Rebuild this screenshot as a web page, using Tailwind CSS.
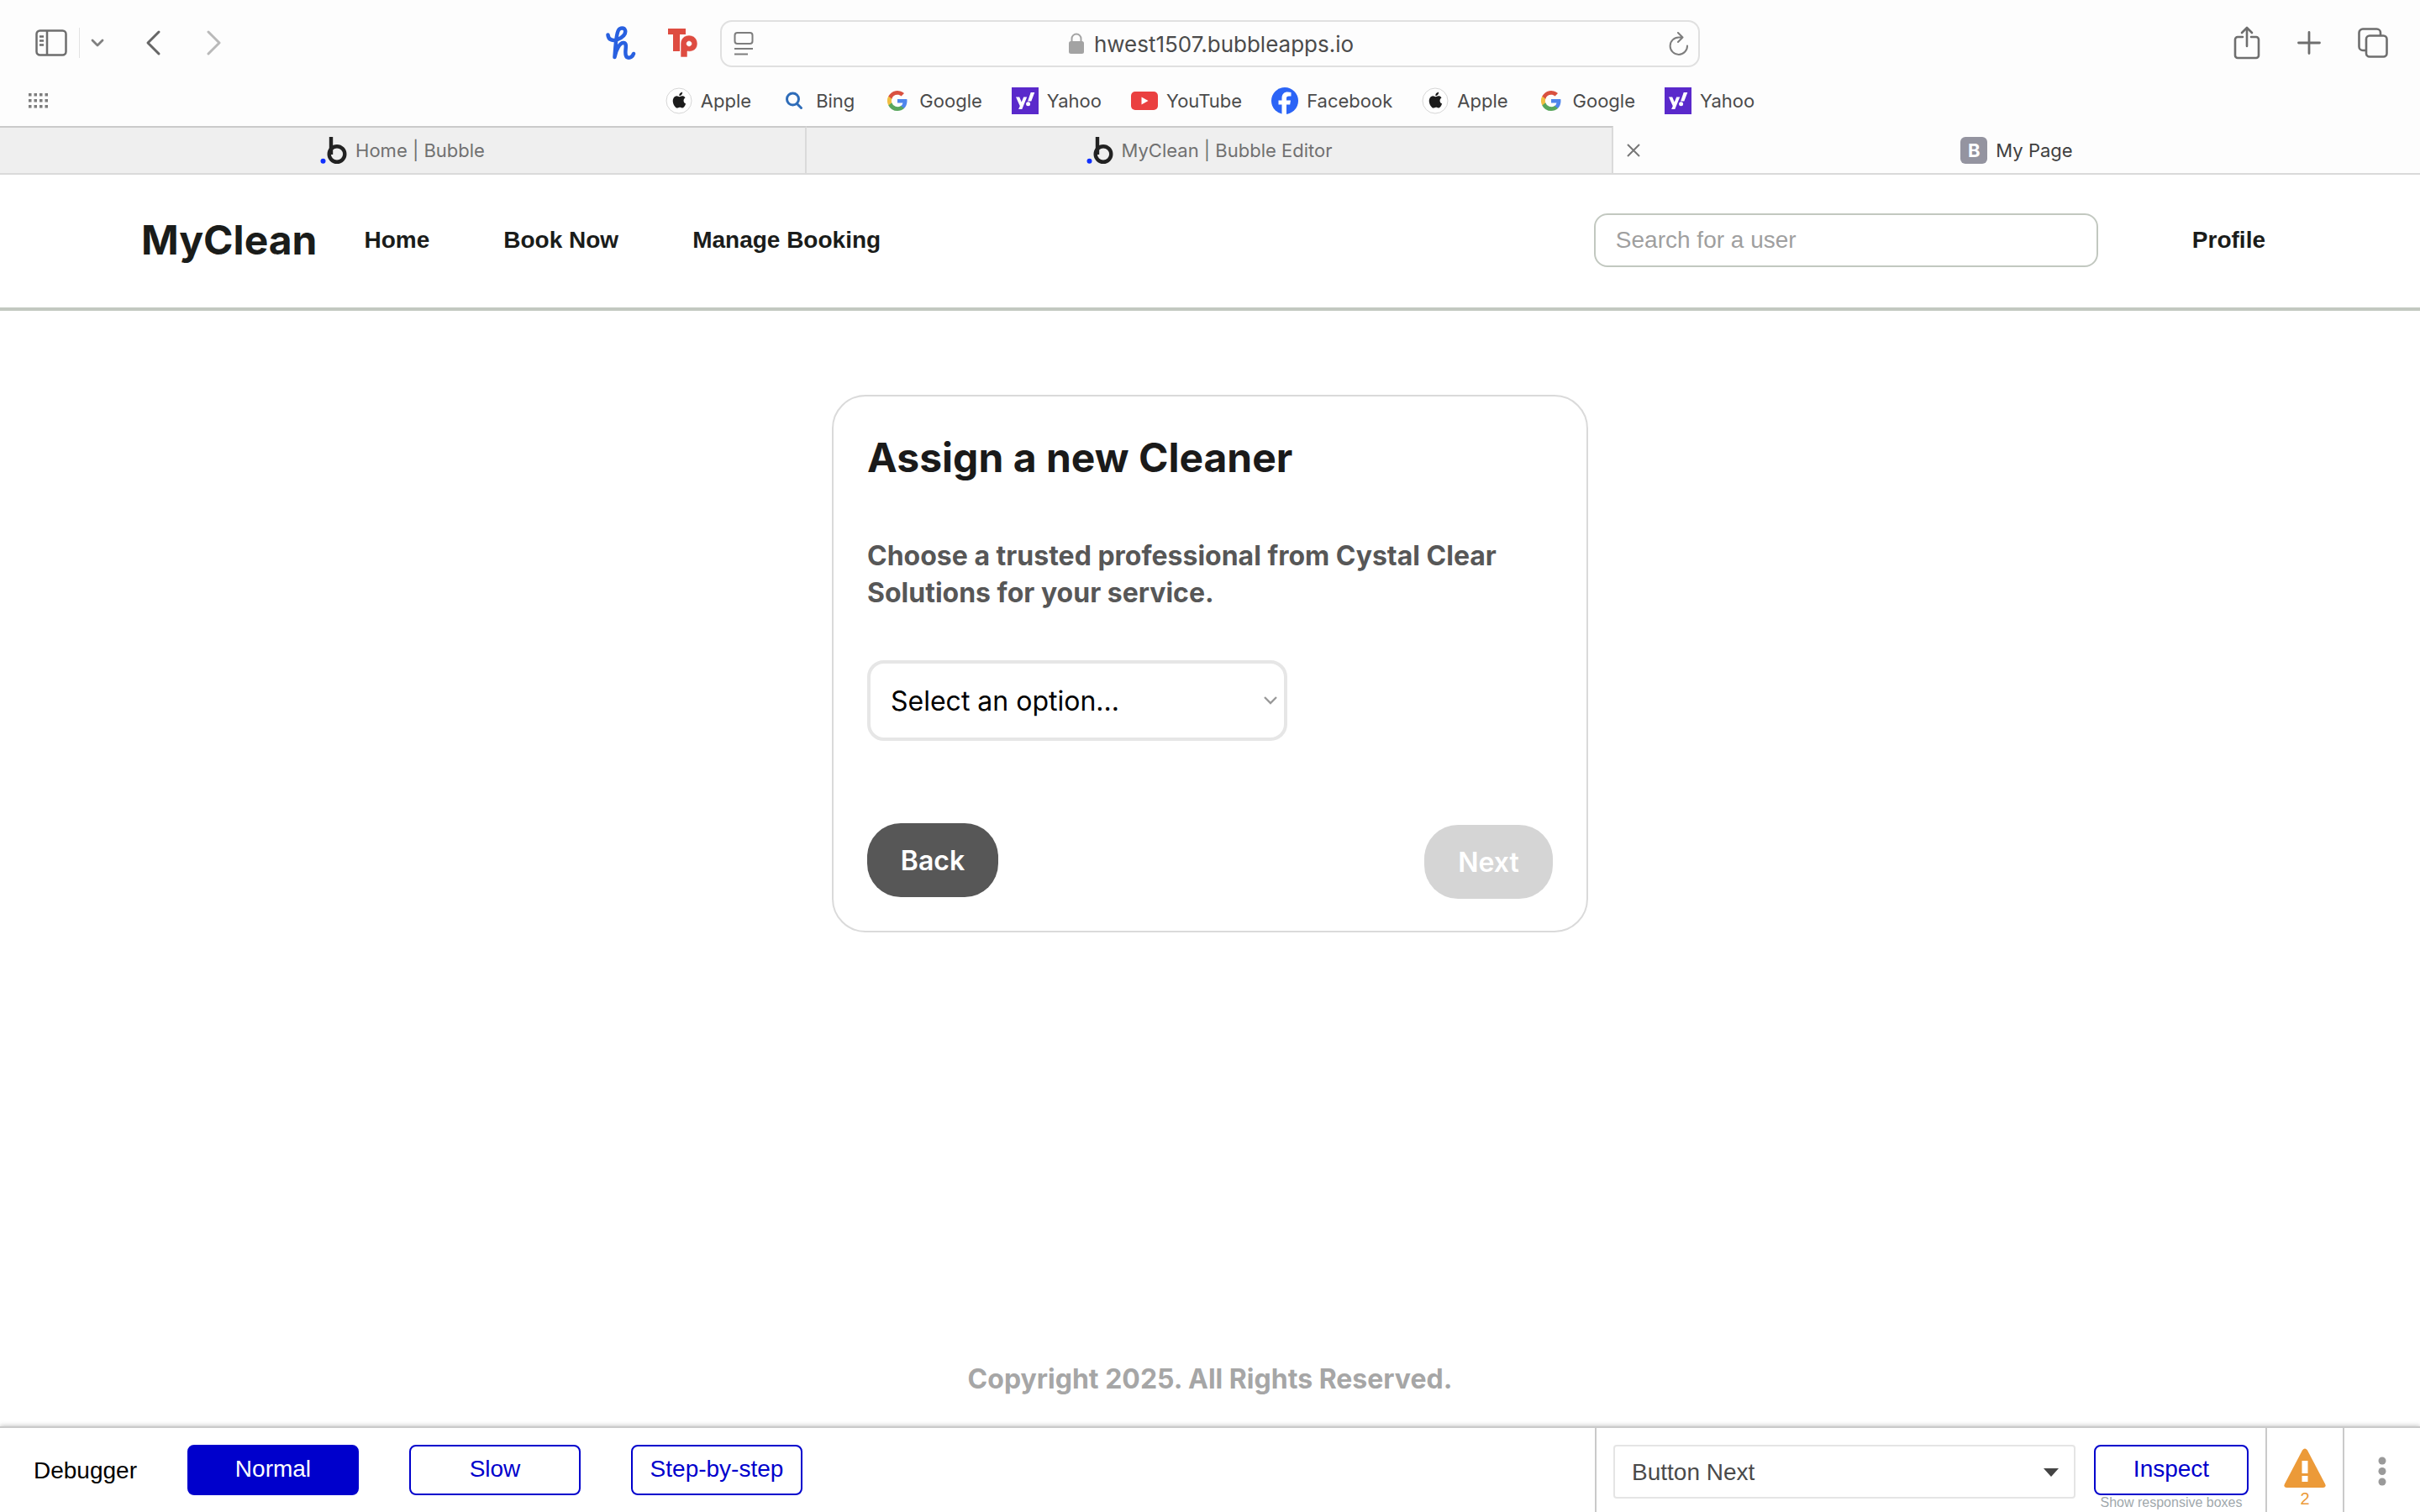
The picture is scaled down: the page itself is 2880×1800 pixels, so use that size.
<!DOCTYPE html>
<html lang="en">
<head>
<meta charset="utf-8">
<title>My Page</title>
<script src="https://cdn.jsdelivr.net/npm/@tailwindcss/browser@4"></script>
</head>
<body class="flex min-h-screen flex-col bg-white font-['Liberation_Sans',Arial,sans-serif] text-black">
<svg class="hidden" aria-hidden="true">
  <symbol id="apple" viewBox="0 0 32 32"><circle cx="16" cy="16" r="15" fill="#fff" stroke="#d6d6d6" stroke-width="1"/><path transform="translate(-3.400 -3.700) scale(1.200)" d="M20.800 16.300c0-2 1.600-2.900 1.700-3-1-1.400-2.400-1.600-2.900-1.600-1.200-.1-2.400.7-3 .7s-1.600-.7-2.600-.7c-1.300 0-2.600.8-3.200 2-1.400 2.400-.4 5.900 1 7.900.7.900 1.400 2 2.500 2 1 0 1.400-.7 2.600-.7s1.500.7 2.600.6c1.100 0 1.700-1 2.400-1.900.7-1.100 1-2.200 1.100-2.200-.1 0-2.200-.8-2.200-3.100zM18.800 10.300c.6-.7.900-1.600.8-2.500-.8 0-1.700.5-2.300 1.200-.5.600-1 1.500-.8 2.400.8 0 1.700-.4 2.300-1.100z" fill="#1c1c1c"/></symbol>
  <symbol id="google" viewBox="0 0 24 24"><path fill="#4f86ec" d="M23.500 12.300c0-.8-.1-1.600-.2-2.300H12v4.500h6.500a5.600 5.600 0 0 1-2.400 3.600v3h3.900c2.200-2.100 3.500-5.200 3.500-8.800z"/><path fill="#58a65c" d="M12 24c3.200 0 6-1.100 8-2.900l-3.900-3a7.200 7.200 0 0 1-10.800-3.800h-4v3.100A12 12 0 0 0 12 24z"/><path fill="#f1be42" d="M5.300 14.300a7.200 7.200 0 0 1 0-4.600V6.600h-4a12 12 0 0 0 0 10.800z"/><path fill="#d95140" d="M12 4.800c1.800 0 3.300.6 4.600 1.800L20 3.100A12 12 0 0 0 1.300 6.600l4 3.100A7.200 7.200 0 0 1 12 4.800z"/></symbol>
  <symbol id="yahoo" viewBox="0 0 32 32"><path fill="#5a29cb" d="M0 0h32v32H0z"/><path fill="#fff" d="M5 11.500h4.200l2.500 5.900 2.500-5.900h4L12.300 26H8.100l1.700-3.700zM22.700 6h4.600l-4 10.500h-4.200z"/><circle cx="19.600" cy="19.700" r="2.500" fill="#fff"/></symbol>
  <symbol id="bubble" viewBox="0 0 32 32"><path d="M13 0v21" stroke="#222" stroke-width="4.400"/><circle cx="20" cy="20.500" r="9.300" fill="none" stroke="#222" stroke-width="4.400"/><circle cx="3.500" cy="28.800" r="3" fill="#1030ff"/></symbol>
</svg>

<div class="bg-[#fdfdfd] font-[Inter,sans-serif] text-[#4b4b4b]">
  <div class="grid h-[90px] grid-cols-[1fr_1166px_1fr] items-center pt-[14px]">
    <div class="flex items-center justify-between pr-[26px] pb-0.5 pl-[42px]">
      <div class="flex items-center">
        <button aria-label="Sidebar"><svg class="h-8 w-[38px]" viewBox="0 0 38 32" fill="none" stroke="#6e6e6e" stroke-width="2.500"><rect x="1.500" y="1.500" width="35" height="29" rx="4"/><path d="M14 1v30M5 8.500h5M5 13.500h5M5 18.500h5"/></svg></button>
        <span class="ml-[14px] h-9 w-px bg-[#e2e2e2]"></span>
        <button aria-label="Tab groups" class="ml-[13px]"><svg class="h-4 w-4" viewBox="0 0 16 16" fill="none" stroke="#808080" stroke-width="2.800" stroke-linecap="round" stroke-linejoin="round"><path d="M2 5l6 6 6-6"/></svg></button>
        <button aria-label="Back" class="ml-12"><svg class="h-8 w-5" viewBox="0 0 20 32" fill="none" stroke="#666" stroke-width="3" stroke-linecap="round" stroke-linejoin="round"><path d="M17 3L4 16l13 13"/></svg></button>
        <button aria-label="Forward" class="ml-[53px]"><svg class="h-8 w-5" viewBox="0 0 20 32" fill="none" stroke="#b9b9b9" stroke-width="3" stroke-linecap="round" stroke-linejoin="round"><path d="M3 3l13 13L3 29"/></svg></button>
      </div>
      <div class="flex items-center gap-[38px]">
        <button aria-label="Honey"><svg class="h-10 w-9" viewBox="0 0 36 40" fill="none" stroke="#2860e0" stroke-width="4.500" stroke-linecap="round" stroke-linejoin="round"><path d="M2.500 10.500C3 17 9 18 14 16c7-3 10-7 9-11-1-3.500-6-3.500-8 0-3 5-3.500 20-4.500 32C12 28 17 19 21.500 20c5.500 1-1 13 3.500 17 4 2 7-1 8-4"/></svg></button>
        <button aria-label="Teachers Pay"><svg class="h-9 w-9" viewBox="0 0 36 36" fill="#de4c41"><path d="M0 1h21v7h-7v20H6V8H0z"/><path fill-rule="evenodd" stroke="#fdfdfd" stroke-width=".6" d="M15 28V19c0-6 4.500-10 10-10s10 4 10 10-5 10.500-12 9V35H15zm10-12a3 3 0 1 0 .1 0z"/></svg></button>
      </div>
    </div>
    <div class="flex h-14 items-center rounded-[14px] border-2 border-[#e0e0e0] pr-[11px] pl-[14px]">
      <svg class="h-7 w-6" viewBox="0 0 24 28" fill="none" stroke="#7d7d7d" stroke-width="2"><rect x="1.500" y="1" width="21" height="13" rx="3"/><path d="M1 20h22M1 26.500h16"/></svg>
      <div class="flex flex-1 items-center justify-center gap-3 text-[26px]">
        <svg class="h-7 w-[18px]" viewBox="0 0 18 28"><rect y="11" width="18" height="15" rx="2.500" fill="#a3a3a3"/><path d="M3.500 12V8a5.500 5.500 0 0 1 11 0v4" fill="none" stroke="#a3a3a3" stroke-width="2"/></svg>
        <span>hwest1507.bubbleapps.io</span>
      </div>
      <button aria-label="Reload"><svg class="h-7 w-6" viewBox="0 0 24 28" fill="none" stroke="#7d7d7d" stroke-width="2" stroke-linecap="round" stroke-linejoin="round"><path d="M22 16.500A10.200 10.200 0 1 1 12 6.500h4M11 1l5.500 5.500-5.500 5.500"/></svg></button>
    </div>
    <div class="flex items-center justify-end gap-11 pr-[38px] pb-0.5">
      <button aria-label="Share"><svg class="h-10 w-8" viewBox="0 0 32 40" fill="none" stroke="#6e6e6e" stroke-width="2.600" stroke-linecap="round" stroke-linejoin="round"><path d="M11 13H5a3 3 0 0 0-3 3v19a3 3 0 0 0 3 3h22a3 3 0 0 0 3-3V16a3 3 0 0 0-3-3h-6M16 24V2M10 8l6-6 6 6"/></svg></button>
      <button aria-label="New tab"><svg class="h-7 w-7" viewBox="0 0 28 28" stroke="#6e6e6e" stroke-width="2.800" stroke-linecap="round"><path d="M14 1.500v25M1.500 14h25"/></svg></button>
      <button aria-label="Tab overview"><svg class="h-9 w-9" viewBox="0 0 36 36" fill="none" stroke="#6e6e6e" stroke-width="2.600"><rect x="10" y="9.500" width="24.500" height="25" rx="4"/><path d="M10 27H6a4.500 4.500 0 0 1-4.500-4.500V6A4.500 4.500 0 0 1 6 1.500h16.500A4.500 4.500 0 0 1 27 6v3.500"/></svg></button>
    </div>
  </div>

  <div class="grid h-[60px] grid-cols-[1fr_auto_1fr] items-center px-[33px]">
    <button aria-label="Favorites" class="justify-self-start"><svg class="h-5 w-6" viewBox="0 0 24 20" fill="#7d7d7d"><g id="dots"><rect x="1" y="1" width="3.500" height="3.500"/><rect x="7.500" y="1" width="3.500" height="3.500"/><rect x="14" y="1" width="3.500" height="3.500"/><rect x="20.500" y="1" width="3.500" height="3.500"/></g><use href="#dots" y="7"/><use href="#dots" y="14"/></svg></button>
    <nav class="flex items-center gap-[35px] text-[22px]">
      <a href="#" class="flex items-center gap-[10px]"><svg class="size-8"><use href="#apple"/></svg>Apple</a>
      <a href="#" class="flex items-center gap-[10px]"><svg class="size-8" viewBox="0 0 32 32" fill="none" stroke="#2e6cb8" stroke-width="3" stroke-linecap="round"><circle cx="14.500" cy="14" r="7"/><path d="M19.500 19.500l5 5"/></svg>Bing</a>
      <a href="#" class="flex items-center gap-[10px]"><svg class="size-8 p-1"><use href="#google"/></svg>Google</a>
      <a href="#" class="flex items-center gap-[10px]"><svg class="size-8"><use href="#yahoo"/></svg>Yahoo</a>
      <a href="#" class="flex items-center gap-[10px]"><svg class="size-8" viewBox="0 0 32 32"><rect y="5" width="32" height="22" rx="5" fill="#ea4040"/><path d="M12.500 11.500v9l8-4.500z" fill="#fff"/></svg>YouTube</a>
      <a href="#" class="flex items-center gap-[10px]"><svg class="size-8" viewBox="0 0 32 32"><circle cx="16" cy="16" r="16" fill="#2b64f6"/><path d="M12.500 32V20.500H8.500v-5h4V13c0-5 2.500-7.500 7-7.500 1.500 0 3 .2 4 .5v4.500h-2.500c-2.500 0-3 1-3 2.800v2.200h5l-.8 5H18V32z" fill="#fff"/></svg>Facebook</a>
      <a href="#" class="flex items-center gap-[10px]"><svg class="size-8"><use href="#apple"/></svg>Apple</a>
      <a href="#" class="flex items-center gap-[10px]"><svg class="size-8 p-1"><use href="#google"/></svg>Google</a>
      <a href="#" class="flex items-center gap-[10px]"><svg class="size-8"><use href="#yahoo"/></svg>Yahoo</a>
    </nav>
  </div>

  <div class="grid h-[58px] grid-cols-3 border-b-2 border-[#dadada] text-[22px] text-[#717171]">
    <div class="flex items-center justify-center gap-[10px] border-t-2 border-r-2 border-t-[#cacaca] border-r-[#dadada] bg-[#efefef]"><svg class="size-8"><use href="#bubble"/></svg>Home | Bubble</div>
    <div class="flex items-center justify-center gap-[10px] border-t-2 border-r-2 border-t-[#cacaca] border-r-[#dadada] bg-[#efefef]"><svg class="size-8"><use href="#bubble"/></svg>MyClean | Bubble Editor</div>
    <div class="grid grid-cols-[48px_1fr_48px] items-center border-t-2 border-transparent text-[#404040]">
      <button aria-label="Close tab" class="justify-self-center"><svg class="size-4" viewBox="0 0 16 16" stroke="#777" stroke-width="2"><path d="M1 1l14 14M15 1L1 15"/></svg></button>
      <div class="flex items-center justify-center gap-[10px]"><span class="flex size-8 items-center justify-center rounded-md bg-[#9494a0] font-bold text-white">B</span>My Page</div>
    </div>
  </div>
</div>

<header class="flex h-[162px] items-center border-b-4 border-[#c2c8c0] pr-[184px] pb-0.5 pl-[168px] text-[28px] font-bold text-[#1a1c1a]">
  <span class="font-[Inter,sans-serif] text-5xl font-bold">MyClean</span>
  <nav class="ml-14 flex gap-[88px]"><a href="#">Home</a><a href="#">Book Now</a><a href="#">Manage Booking</a></nav>
  <input type="text" aria-label="Search for a user" placeholder="Search for a user" class="ml-auto h-16 w-[600px] rounded-2xl border-2 border-[#c2c8c0] px-6 font-normal placeholder:text-[#9f9f9f]">
  <a href="#" class="ml-28">Profile</a>
</header>

<main class="flex flex-1 flex-col items-center font-[Inter,sans-serif]">
  <section class="mt-[100px] w-[900px] rounded-[40px] border-2 border-[#dadada] px-10 pt-11 pb-[38px]">
    <h1 class="text-5xl leading-[58px] font-bold text-[#1a1a1a]">Assign a new Cleaner</h1>
    <p class="mt-[66px] text-[32px] leading-[44px] font-bold text-[#575757]">Choose a trusted professional from Cystal Clear Solutions for your service.</p>
    <div class="relative mt-[58px] w-[500px]">
      <select aria-label="Cleaner" class="h-24 w-full appearance-none rounded-[20px] border-4 border-[#e6e6e6] bg-white px-6 pt-0.5 text-[32px] text-black"><option>Select an option...</option></select>
      <svg class="pointer-events-none absolute top-10 right-3 size-4" viewBox="0 0 16 16" fill="none" stroke="#999" stroke-width="2.400"><path d="M1 4l7 7 7-7"/></svg>
    </div>
    <div class="mt-[98px] flex items-end justify-between text-[32px] font-semibold text-white">
      <button class="mb-[2px] h-[88px] w-[156px] rounded-[40px] bg-[#575757] pt-0.5">Back</button>
      <button disabled class="h-[88px] w-[153px] rounded-[40px] bg-[#d5d5d5] pt-0.5">Next</button>
    </div>
  </section>
  <footer class="mt-auto pb-[34px] text-[32px] leading-[44px] font-bold text-[#a6a6a6]">Copyright 2025. All Rights Reserved.</footer>
</main>

<div class="flex h-[102px] border-t-2 border-[#cacaca] bg-white text-[28px] shadow-[0_0_6px_rgba(0,0,0,0.3)]">
  <div class="flex flex-1 items-start gap-[60px] pt-5 pl-10">
    <span class="leading-[62px]">Debugger</span>
    <div class="flex gap-[60px] text-[#0000cc]">
      <button class="h-[60px] w-[204px] rounded-lg border-2 border-[#0000cc] bg-[#0000cc] pb-0.5 text-white">Normal</button>
      <button class="h-[60px] w-[204px] rounded-lg border-2 border-[#0000cc] pb-0.5">Slow</button>
      <button class="h-[60px] w-[204px] rounded-lg border-2 border-[#0000cc] pb-0.5">Step-by-step</button>
    </div>
  </div>
  <div class="flex w-[798px] items-start gap-[22px] border-l-2 border-[#cacaca] pt-5 pl-5">
    <div class="relative">
      <select aria-label="Element" class="h-16 w-[550px] appearance-none rounded-sm border-2 border-[#e5e5e5] bg-white px-5 pt-0.5 text-[#4a4a4a]"><option>Button Next</option></select>
      <svg class="pointer-events-none absolute top-7 right-5 h-[10px] w-[18px]" viewBox="0 0 18 10" fill="#444"><path d="M0 0h18l-9 10z"/></svg>
    </div>
    <div class="flex flex-col items-center">
      <button class="h-[60px] w-[184px] rounded-lg border-2 border-[#0000cc] pb-0.5 text-[#0000cc]">Inspect</button>
      <span class="text-base leading-[18px] text-[#a0a8ac]">Show responsive boxes</span>
    </div>
  </div>
  <div class="flex w-[92px] flex-col items-center border-l-2 border-[#cacaca] pt-6 text-[#ec9a38]">
    <svg class="h-[48px] w-[50px]" viewBox="0 0 50 48"><path d="M22 2.500q3-4 6 0l21 40q2 4-2 4.500H3q-4-.5-2-4.500z" fill="#ec9a38"/><path d="M21.500 15h7v15h-7zM21.500 33h7v7h-7z" fill="#fff"/></svg>
    <span class="text-xl leading-6">2</span>
  </div>
  <button aria-label="More" class="flex w-[92px] justify-center border-l-2 border-[#cacaca] pt-[34px]"><svg class="h-9 w-[10px]" viewBox="0 0 10 36" fill="#9a9a9a"><circle cx="5" cy="5" r="4.500"/><circle cx="5" cy="17.500" r="4.500"/><circle cx="5" cy="30" r="4.500"/></svg></button>
</div>
</body>
</html>
